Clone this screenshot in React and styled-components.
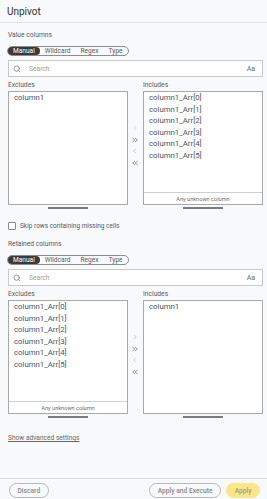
import React from 'react';
import styled, { createGlobalStyle } from 'styled-components';
import { Search } from 'lucide-react';

const GlobalStyle = createGlobalStyle`
  html, body {
    margin: 0;
    padding: 0;
  }
  body {
    font-family: Roboto, "Noto Sans", sans-serif;
    background: #f8f9fa;
  }
`;

const Panel = styled.div`
  width: 267px;
  height: 499px;
  display: flex;
  flex-direction: column;
  background: #f8f9fa;
  overflow: hidden;
`;

const Header = styled.div`
  flex: none;
  height: 22px;
  display: flex;
  align-items: center;
  padding: 0 7px;
  border-bottom: 1px solid #dfe2e6;
  font-size: 10px;
  color: #333;
`;

const Body = styled.div`
  flex: 1;
  display: flex;
  flex-direction: column;
  padding: 0 4px 0 8px;
`;

const SectionLabel = styled.div`
  margin-top: ${(p) => p.$top}px;
  font-size: 6.7px;
  line-height: 9px;
  color: #5a5a5a;
`;

const Segmented = styled.div`
  display: inline-flex;
  align-self: flex-start;
  box-sizing: border-box;
  height: 10px;
  margin: 6px 0 0 -1px;
  border: 1px solid #8d8d8d;
  border-radius: 6px;
`;

const Segment = styled.span`
  padding: 0 5px;
  font-size: 6.6px;
  line-height: 8px;
  border-radius: 6px;
  color: ${(p) => (p.$active ? '#fff' : '#5a5a5a')};
  background: ${(p) => (p.$active ? '#3a3a3a' : 'transparent')};
`;

const SearchBox = styled.div`
  display: flex;
  align-items: center;
  gap: 8px;
  box-sizing: border-box;
  height: 17px;
  margin-top: 4px;
  padding: 0 7px 0 4px;
  background: #fff;
  border: 1px solid #c9c9c9;
  color: #666;
`;

const SearchText = styled.span`
  flex: 1;
  font-size: 6.7px;
  color: #a0a0a0;
`;

const CaseToggle = styled.span`
  font-size: 7px;
  color: #6a6a6a;
`;

const DualList = styled.div`
  display: grid;
  grid-template-columns: 120px 15px 1fr;
  grid-template-rows: auto auto auto;
  margin-top: 4px;
`;

const ListLabel = styled.div`
  grid-column: ${(p) => p.$col};
  font-size: 6.7px;
  line-height: 9px;
  margin-bottom: 1px;
  color: #5a5a5a;
`;

const ListBox = styled.div`
  grid-column: ${(p) => p.$col};
  grid-row: 2;
  display: flex;
  flex-direction: column;
  box-sizing: border-box;
  height: 114px;
  background: #fff;
  border: 1px solid #a9a9a9;
`;

const Items = styled.div`
  flex: 1;
  padding-left: 5px;
`;

const Item = styled.div`
  font-size: 7.8px;
  line-height: 11.5px;
  color: #4d5461;
  white-space: nowrap;
`;

const UnknownRow = styled.div`
  flex: none;
  height: 11px;
  display: flex;
  align-items: center;
  justify-content: center;
  border-top: 1px solid #cfcfcf;
  font-size: 5.6px;
  color: #6a6a6a;
`;

const Arrows = styled.div`
  grid-column: 2;
  grid-row: 2;
  display: flex;
  flex-direction: column;
  align-items: center;
  justify-content: center;
  padding: 0 2px 5px 0;
`;

const ArrowButton = styled.div`
  height: 11.7px;
  display: flex;
  align-items: center;
  color: ${(p) => (p.$disabled ? '#c8c8c8' : '#7a7a7a')};
`;

const Thumb = styled.div`
  grid-column: ${(p) => p.$col};
  grid-row: 3;
  justify-self: center;
  width: 40px;
  height: 2px;
  margin-top: 2px;
  background: #7b7b7b;
`;

const CheckRow = styled.label`
  display: flex;
  align-items: center;
  gap: 4px;
  height: 8px;
  margin-top: 13px;
  font-size: 6.5px;
  color: #5a5a5a;
`;

const CheckBox = styled.span`
  width: 8px;
  height: 8px;
  box-sizing: border-box;
  border: 1px solid #8a8a8a;
  border-radius: 1px;
  background: #fff;
`;

const AdvancedLink = styled.span`
  align-self: flex-start;
  margin-top: 16px;
  font-size: 6.6px;
  line-height: 9px;
  color: #666;
  text-decoration: underline;
`;

const Footer = styled.div`
  flex: none;
  height: 21px;
  box-sizing: border-box;
  display: flex;
  align-items: flex-start;
  gap: 5px;
  padding: 4px 7px 0 9px;
  border-top: 1px solid #dcdfe3;
`;

const Button = styled.button`
  height: 15px;
  box-sizing: border-box;
  padding: 0 7.5px;
  margin-right: ${(p) => (p.$push ? 'auto' : '0')};
  border-radius: 8px;
  font-family: inherit;
  font-size: 6.7px;
  font-weight: 500;
  border: 1px solid ${(p) => (p.$primary ? '#fbe68a' : '#b8b8b8')};
  background: ${(p) => (p.$primary ? '#fbe68a' : 'transparent')};
  color: ${(p) => (p.$primary ? '#a39c7c' : '#8a8a8a')};
`;

const Chevron = ({ double, left }) => (
  <svg width="6" height="6" viewBox="0 0 6 6" fill="none" stroke="currentColor" strokeWidth="0.8"
    style={left ? { transform: 'scaleX(-1)' } : undefined}>
    {double ? (
      <>
        <polyline points="0.5,1 2.8,3 0.5,5" />
        <polyline points="3,1 5.3,3 3,5" />
      </>
    ) : (
      <polyline points="2,1 4.3,3 2,5" />
    )}
  </svg>
);

const arrCols = [0, 1, 2, 3, 4, 5].map((i) => `column1_Arr[${i}]`);

const ColumnSection = ({ title, top, excludes, includes, unknownOn }) => (
  <>
    <SectionLabel $top={top}>{title}</SectionLabel>
    <Segmented>
      <Segment $active>Manual</Segment>
      <Segment>Wildcard</Segment>
      <Segment>Regex</Segment>
      <Segment>Type</Segment>
    </Segmented>
    <SearchBox>
      <Search size={8} strokeWidth={2} />
      <SearchText>Search</SearchText>
      <CaseToggle>Aa</CaseToggle>
    </SearchBox>
    <DualList>
      <ListLabel $col={1}>Excludes</ListLabel>
      <ListLabel $col={3}>Includes</ListLabel>
      <ListBox $col={1}>
        <Items>
          {excludes.map((c) => <Item key={c}>{c}</Item>)}
        </Items>
        {unknownOn === 'left' && <UnknownRow>Any unknown column</UnknownRow>}
      </ListBox>
      <Arrows>
        <ArrowButton $disabled><Chevron /></ArrowButton>
        <ArrowButton><Chevron double /></ArrowButton>
        <ArrowButton $disabled><Chevron left /></ArrowButton>
        <ArrowButton><Chevron double left /></ArrowButton>
      </Arrows>
      <ListBox $col={3}>
        <Items>
          {includes.map((c) => <Item key={c}>{c}</Item>)}
        </Items>
        {unknownOn === 'right' && <UnknownRow>Any unknown column</UnknownRow>}
      </ListBox>
      <Thumb $col={1} />
      <Thumb $col={3} />
    </DualList>
  </>
);

export default function App() {
  return (
    <Panel>
      <GlobalStyle />
      <Header>Unpivot</Header>
      <Body>
        <ColumnSection
          title="Value columns"
          top={8}
          excludes={['column1']}
          includes={arrCols}
          unknownOn="right"
        />
        <CheckRow>
          <CheckBox />
          Skip rows containing missing cells
        </CheckRow>
        <ColumnSection
          title="Retained columns"
          top={10}
          excludes={arrCols}
          includes={['column1']}
          unknownOn="left"
        />
        <AdvancedLink>Show advanced settings</AdvancedLink>
      </Body>
      <Footer>
        <Button $push>Discard</Button>
        <Button>Apply and Execute</Button>
        <Button $primary>Apply</Button>
      </Footer>
    </Panel>
  );
}
